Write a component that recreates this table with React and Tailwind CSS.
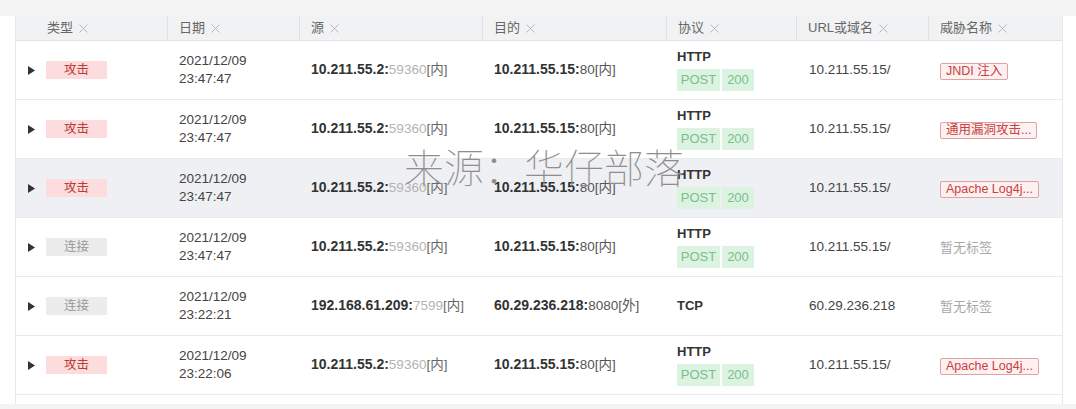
import React from 'react';

const cols = 'grid grid-cols-[152px_132px_183px_184px_130px_132px_133px]';

const rows = [
  { type: 'attack', date: '2021/12/09', time: '23:47:47', src: '10.211.55.2:', sport: '59360', dst: '10.211.55.15:', dport: '80', dzone: '[内]', proto: 'HTTP', http: true, url: '10.211.55.15/', threat: 'JNDI 注入' },
  { type: 'attack', date: '2021/12/09', time: '23:47:47', src: '10.211.55.2:', sport: '59360', dst: '10.211.55.15:', dport: '80', dzone: '[内]', proto: 'HTTP', http: true, url: '10.211.55.15/', threat: '通用漏洞攻击...' },
  { type: 'attack', date: '2021/12/09', time: '23:47:47', src: '10.211.55.2:', sport: '59360', dst: '10.211.55.15:', dport: '80', dzone: '[内]', proto: 'HTTP', http: true, url: '10.211.55.15/', threat: 'Apache Log4j...', active: true },
  { type: 'conn', date: '2021/12/09', time: '23:47:47', src: '10.211.55.2:', sport: '59360', dst: '10.211.55.15:', dport: '80', dzone: '[内]', proto: 'HTTP', http: true, url: '10.211.55.15/', threat: null },
  { type: 'conn', date: '2021/12/09', time: '23:22:21', src: '192.168.61.209:', sport: '7599', dst: '60.29.236.218:', dport: '8080', dzone: '[外]', proto: 'TCP', http: false, url: '60.29.236.218', threat: null },
  { type: 'attack', date: '2021/12/09', time: '23:22:06', src: '10.211.55.2:', sport: '59360', dst: '10.211.55.15:', dport: '80', dzone: '[内]', proto: 'HTTP', http: true, url: '10.211.55.15/', threat: 'Apache Log4j...' },
];

const headers = ['类型', '日期', '源', '目的', '协议', 'URL或域名', '威胁名称'];

function CloseX() {
  return (
    <svg width="11" height="11" viewBox="0 0 11 11" className="ml-[5px]">
      <path d="M1.5 1.5 L9.5 9.5 M9.5 1.5 L1.5 9.5" stroke="#b5b8bd" strokeWidth="1" fill="none" />
    </svg>
  );
}

function Row({ r }) {
  return (
    <div className={`${cols} h-[59px] items-center border-b border-[#e9eaec] ${r.active ? 'bg-[#eef0f3]' : 'bg-white'}`}>
      <div className="flex items-center pl-[12px]">
        <svg width="7" height="9" viewBox="0 0 7 9" className="mr-[11px]">
          <path d="M0 0 L7 4.5 L0 9 Z" fill="#333" />
        </svg>
        {r.type === 'attack' ? (
          <span className="w-[61px] h-[18px] flex items-center justify-center bg-[#fcdcdc] text-[#b83c38] text-[12.5px]">攻击</span>
        ) : (
          <span className="w-[61px] h-[18px] flex items-center justify-center bg-[#ececec] text-[#9a9a9a] text-[12.5px]">连接</span>
        )}
      </div>
      <div className="pl-[11px] text-[13.5px] leading-[18px] text-[#444]">
        <div>{r.date}</div>
        <div>{r.time}</div>
      </div>
      <div className="pl-[11px] text-[13.5px] whitespace-nowrap">
        <span className="font-bold text-[#333] text-[14px]">{r.src}</span>
        <span className="text-[#b3b3b3]">{r.sport}</span>
        <span className="text-[#666]">[内]</span>
      </div>
      <div className="pl-[11px] text-[13.5px] whitespace-nowrap">
        <span className="font-bold text-[#333] text-[14px]">{r.dst}</span>
        <span className="text-[#555]">{r.dport}{r.dzone}</span>
      </div>
      <div className="pl-[10px]">
        <div className="font-bold text-[13px] text-[#333] leading-[16px]">{r.proto}</div>
        {r.http && (
          <div className="flex gap-[2px] mt-[4px]">
            <span className="h-[22px] w-[43px] flex items-center justify-center bg-[#ddf3e1] text-[#78c08c] text-[13px]">POST</span>
            <span className="h-[22px] w-[32px] flex items-center justify-center bg-[#ddf3e1] text-[#78c08c] text-[13px]">200</span>
          </div>
        )}
      </div>
      <div className="pl-[12px] text-[13.5px] text-[#444]">{r.url}</div>
      <div className="pl-[11px]">
        {r.threat ? (
          <span className="inline-flex items-center h-[17px] px-[5px] border border-[#e3a2a2] bg-[#fdf0f0] rounded-[2px] text-[#c94040] text-[12.5px]">{r.threat}</span>
        ) : (
          <span className="text-[13px] text-[#a8a8a8]">暂无标签</span>
        )}
      </div>
    </div>
  );
}

export default function App() {
  return (
    <div className="w-[1076px] h-[409px] bg-white overflow-hidden relative" style={{ fontFamily: '"Liberation Sans", "Noto Sans CJK SC", sans-serif' }}>
      <div className="h-[16px] bg-[#f3f3f4]" />
      <div className="ml-[15px] w-[1048px] border-l border-r border-[#e6e7e9]">
        <div className={`${cols} h-[25px] bg-[#f1f2f4] border-b border-[#e2e4e7] text-[13px] text-[#666]`}>
          {headers.map((h, i) => (
            <div key={h} className={`flex items-center ${i === 0 ? 'pl-[31px]' : 'pl-[11px]'} ${i < headers.length - 1 ? 'border-r border-[#dfe1e5]' : ''}`}>
              {h}
              <CloseX />
            </div>
          ))}
        </div>
        {rows.map((r, i) => (
          <Row key={i} r={r} />
        ))}
        <div className="h-[9px]" />
      </div>
      <div className="h-[20px] bg-[#f3f3f4]" />
      <div className="absolute left-[404px] top-[142px] text-[40px] leading-[48px] text-[#8e8e8e] font-thin pointer-events-none whitespace-nowrap" style={{ fontFamily: '"Noto Sans CJK SC", sans-serif' }}>
        来源：华仔部落
      </div>
    </div>
  );
}
